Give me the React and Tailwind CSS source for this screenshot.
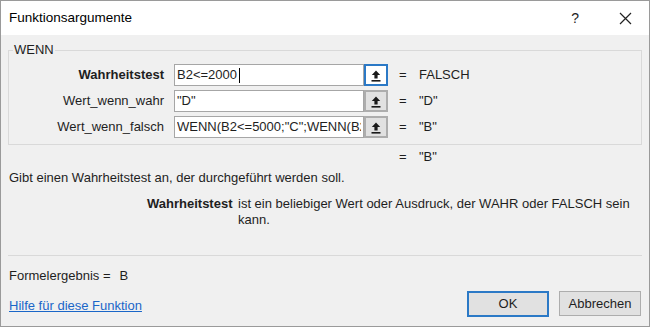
import React from 'react';

const UpIcon = () => (
  <svg width="12" height="13" viewBox="0 0 12 13" fill="none">
    <path d="M6 1.5 L1.8 6 H4.4 V9.5 H7.6 V6 H10.2 Z" fill="#1a1a1a" />
    <rect x="1.5" y="11" width="9" height="1.6" fill="#1a1a1a" />
  </svg>
);

const Row = ({ label, value, result, bold, focused, cursor }) => (
  <div className="flex items-center h-[22px]">
    <div className={`w-[155px] text-right ${bold ? 'font-bold' : ''}`}>{label}</div>
    <div className="ml-[10px] w-[190px] h-[22px] bg-white border border-[#a6a6a6] flex items-center px-[2px] overflow-hidden">
      <input
        readOnly
        value={value}
        className={`outline-none bg-transparent min-w-0 ${cursor ? 'w-[62px]' : 'w-full'}`}
      />
      {cursor && <span className="inline-block w-px h-[15px] bg-black" />}
    </div>
    <div className={`w-[24px] h-[22px] shrink-0 flex items-center justify-center ${focused ? 'bg-white border-2 border-[#2b79c6]' : 'bg-[#e1e1e1] border-2 border-[#adadad]'}`}>
      <UpIcon />
    </div>
    <div className="ml-[11px] w-[20px]">=</div>
    <div>{result}</div>
  </div>
);

export default function App() {
  return (
    <div
      className="w-[650px] h-[327px] border border-[#9a9a9a] bg-[#f0f0f0] text-[13px] text-[#1e1e1e] flex flex-col overflow-hidden"
      style={{ fontFamily: '"Liberation Sans", Arial, sans-serif' }}
    >
      <div className="h-[34px] bg-white flex items-center justify-between shrink-0">
        <div className="pl-[8px] text-[13.5px] text-black">Funktionsargumente</div>
        <div className="flex items-center">
          <div className="text-[14px] mr-[40px]">?</div>
          <svg width="13" height="13" viewBox="0 0 13 13" className="mr-[17px]">
            <path d="M1 1 L12 12 M12 1 L1 12" stroke="#222" strokeWidth="1.2" />
          </svg>
        </div>
      </div>

      <div className="flex-1 px-[7px]">
        <fieldset className="mt-[8px] border border-[#d9d9d9] pt-[7px] pb-[6px] w-[634px]">
          <legend className="ml-[4px] px-[1px] text-[13px] leading-[14px]">WENN</legend>
          <div className="flex flex-col gap-[4px]">
            <Row label="Wahrheitstest" value="B2<=2000" result="FALSCH" bold focused cursor />
            <Row label="Wert_wenn_wahr" value={'"D"'} result={'"D"'} />
            <Row label="Wert_wenn_falsch" value={'WENN(B2<=5000;"C";WENN(B2<=8000;"B";"A"))'} result={'"B"'} />
          </div>
        </fieldset>

        <div className="flex mt-[4px] h-[16px] items-center">
          <div className="ml-[391px] w-[20px]">=</div>
          <div>"B"</div>
        </div>
        <div className="mt-[3px] pl-[1px]">Gibt einen Wahrheitstest an, der durchgeführt werden soll.</div>

        <div className="flex mt-[8px] leading-[16px]">
          <div className="ml-[139px] w-[91px] font-bold">Wahrheitstest</div>
          <div className="w-[400px]">ist ein beliebiger Wert oder Ausdruck, der WAHR oder FALSCH sein kann.</div>
        </div>

        <div className="mt-[27px] h-px bg-[#d9d9d9] w-[634px]" />

        <div className="mt-[10px] pl-[1px] flex">
          <span>Formelergebnis =</span>
          <span className="ml-[9px]">B</span>
        </div>

        <div className="flex items-end justify-between mt-[6px]">
          <a href="#" className="pl-[1px] mb-[2px] text-[#1a66c8] underline">Hilfe für diese Funktion</a>
          <div className="flex gap-[10px] mr-[1px]">
            <button className="w-[82px] h-[26px] bg-[#e1e1e1] border-2 border-[#2b79c6]">OK</button>
            <button className="w-[82px] h-[25px] bg-[#e1e1e1] border border-[#adadad]">Abbrechen</button>
          </div>
        </div>
      </div>
    </div>
  );
}
